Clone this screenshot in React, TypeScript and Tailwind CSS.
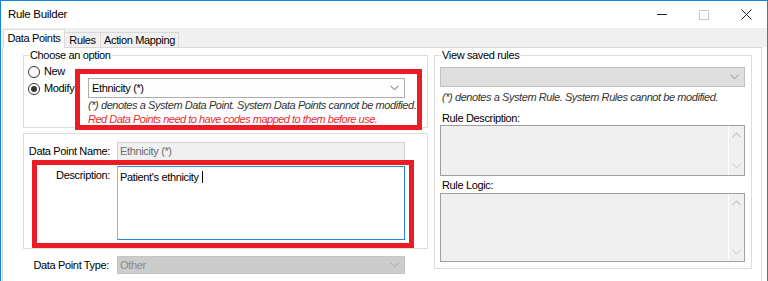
import React from "react";

const font = { fontFamily: '"Liberation Sans", Arial, sans-serif' };

function Chevron({ color = "#606060" }: { color?: string }) {
  return (
    <svg width="9" height="6" viewBox="0 0 9 6" className="block">
      <path d="M0.5 0.8 L4.5 4.8 L8.5 0.8" fill="none" stroke={color} strokeWidth="1" />
    </svg>
  );
}

function ChevronUp({ color = "#c6c6c6" }: { color?: string }) {
  return (
    <svg width="9" height="6" viewBox="0 0 9 6" className="block">
      <path d="M0.5 5.2 L4.5 1.2 L8.5 5.2" fill="none" stroke={color} strokeWidth="1.2" />
    </svg>
  );
}

function Radio({ checked, label }: { checked?: boolean; label: string }) {
  return (
    <div className="flex h-[17px] items-center">
      <div className="flex h-[12px] w-[12px] items-center justify-center rounded-full border border-[#333] bg-white">
        {checked && <div className="h-[6px] w-[6px] rounded-full bg-[#333]" />}
      </div>
      <span className="ml-[4px] text-[11px] tracking-[-0.35px] text-black">{label}</span>
    </div>
  );
}

function ScrollBox({ h }: { h: string }) {
  return (
    <div className={`flex w-[305px] ${h} border border-[#a0a0a0] bg-[#f0f0f0]`}>
      <div className="flex-1" />
      <div className="flex w-[16px] flex-col items-center justify-between border-l border-white py-[6px]">
        <ChevronUp />
        <Chevron color="#c6c6c6" />
      </div>
    </div>
  );
}

export default function App() {
  return (
    <div
      className="flex h-[281px] w-[768px] flex-col overflow-hidden border-x border-t border-[#1883d7] bg-white text-[11px] text-black"
      style={font}
    >
      {/* Title bar */}
      <div className="flex h-[27px] shrink-0 items-center bg-white">
        <span className="pl-[7px] text-[11.5px] tracking-[-0.3px]">Rule Builder</span>
        <div className="ml-auto flex h-full">
          <div className="flex w-[42px] items-center justify-center">
            <div className="h-px w-[10px] bg-[#222]" />
          </div>
          <div className="flex w-[42px] items-center justify-center">
            <div className="h-[10px] w-[10px] border border-[#cccccc]" />
          </div>
          <div className="flex w-[42px] items-center justify-center">
            <svg width="11" height="11" viewBox="0 0 11 11">
              <path d="M0.5 0.5 L10.5 10.5 M10.5 0.5 L0.5 10.5" stroke="#222" strokeWidth="1" />
            </svg>
          </div>
        </div>
      </div>

      {/* Tab strip */}
      <div className="flex h-[19px] shrink-0 items-end bg-[#f0f0f0] pl-[2px]">
        <div className="relative z-10 -mb-px flex h-[19px] w-[62px] items-center justify-center border-x border-t border-[#d9d9d9] bg-white pb-[1px] tracking-[-0.35px]">
          Data Points
        </div>
        <div className="flex h-[15px] w-[36px] items-center justify-center border-r border-t border-[#d9d9d9] bg-[#f0f0f0] tracking-[-0.35px]">
          Rules
        </div>
        <div className="flex h-[15px] w-[78px] items-center justify-center border-r border-t border-[#d9d9d9] bg-[#f0f0f0] tracking-[-0.35px]">
          Action Mapping
        </div>
      </div>

      {/* Tab page */}
      <div className="ml-[1px] mr-[5px] flex flex-1 gap-[6px] border-x border-t border-[#d9d9d9] bg-white pl-[20px] pt-[7px] tracking-[-0.35px]">
        {/* Left column */}
        <div className="flex w-[405px] flex-col">
          {/* Groupbox 1 */}
          <div className="relative h-[73px] border border-[#dcdcdc]">
            <span className="absolute -top-[8px] left-[5px] bg-white px-[1px] leading-[14px]">Choose an option</span>
            <div className="flex">
              <div className="flex w-[64px] flex-col pl-[4px] pt-[7px]">
                <Radio label="New" />
                <Radio checked label="Modify" />
              </div>
              <div className="flex flex-col pt-[22px]">
                <div className="flex h-[20px] w-[317px] items-center justify-between border border-[#adadad] bg-[#fdfdfd] pl-[3px] pr-[5px]">
                  <span>Ethnicity (*)</span>
                  <Chevron />
                </div>
                <div className="h-[14px] italic leading-[14px] tracking-[-0.43px] text-[#333]">
                  (*) denotes a System Data Point. System Data Points cannot be modified.
                </div>
                <div className="h-[14px] italic leading-[14px] tracking-[-0.5px] text-[#ea2a2f]">
                  Red Data Points need to have codes mapped to them before use.
                </div>
              </div>
            </div>
            <div className="pointer-events-none absolute left-[51px] top-[13px] h-[61px] w-[347px] border-[5px] border-[#ec1c24]" />
          </div>

          {/* Groupbox 2 */}
          <div className="relative mt-[5px] h-[116px] border border-[#dcdcdc] pt-[8px]">
            <div className="flex h-[19px] items-center">
              <span className="w-[86px] text-right">Data Point Name:</span>
              <div className="ml-[7px] flex h-[19px] w-[288px] items-center border border-[#d2d2d2] bg-[#f0f0f0] pl-[2px] text-[#6d6d6d]">
                Ethnicity (*)
              </div>
            </div>
            <div className="mt-[5px] flex">
              <span className="w-[86px] pt-[2px] text-right leading-[14px]">Description:</span>
              <div className="ml-[7px] h-[74px] w-[288px] border border-[#2b88d8] border-l-[#86bbea] bg-white pl-[2px] pt-[2px] leading-[14px]">
                Patient's ethnicity<span className="ml-[3px] inline-block h-[12px] w-px translate-y-[2px] bg-black" />
              </div>
            </div>
            <div className="pointer-events-none absolute left-[8px] top-[26px] h-[88px] w-[382px] border-[5px] border-[#ec1c24]" />
          </div>

          {/* Data Point Type */}
          <div className="mt-[7px] flex h-[18px] items-center">
            <span className="w-[86px] text-right">Data Point Type:</span>
            <div className="ml-[8px] flex h-[18px] w-[288px] items-center justify-between border border-[#c4c4c4] bg-[#cccccc] pl-[2px] pr-[5px] text-[#8a8a8a]">
              <span>Other</span>
              <Chevron color="#a6a6a6" />
            </div>
          </div>
        </div>

        {/* Right column */}
        <div className="flex w-[318px] flex-col">
          <div className="relative h-[214px] border border-[#dcdcdc] pl-[5px] pt-[11px]">
            <span className="absolute -top-[8px] left-[6px] bg-white px-[1px] leading-[14px]">View saved rules</span>
            <div className="flex h-[20px] w-[305px] items-center justify-end border border-[#c0c0c0] bg-[#dedede] pr-[5px]">
              <Chevron color="#8c8c8c" />
            </div>
            <div className="mt-[3px] h-[14px] pl-[2px] italic leading-[14px] tracking-[-0.43px] text-[#333]">
              (*) denotes a System Rule. System Rules cannot be modified.
            </div>
            <div className="mt-[7px] h-[14px] pl-[2px] leading-[14px]">Rule Description:</div>
            <ScrollBox h="h-[51px]" />
            <div className="mt-[2px] h-[14px] pl-[2px] leading-[14px]">Rule Logic:</div>
            <div className="mt-[1px]">
              <ScrollBox h="h-[69px]" />
            </div>
          </div>
        </div>
      </div>
    </div>
  );
}
